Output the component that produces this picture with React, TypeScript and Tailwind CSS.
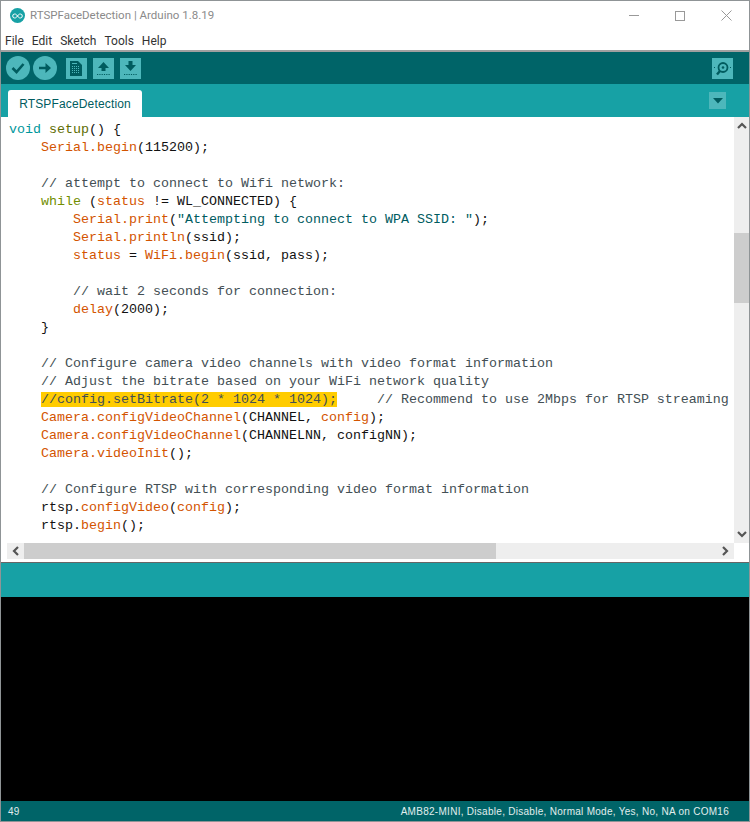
const ORANGE = "text-[#d35400]"
const TEAL = "text-[#00979c]"
const OLIVE = "text-[#5e6d03]"
const GREEN = "text-[#728e00]"
const GREY = "text-[#434f54]"
const STR = "text-[#005c5f]"
const PLAIN = "text-[#111]"

type Token = [string, string?, boolean?]

const lines: Token[][] = [
  [["void", TEAL], [" "], ["setup", OLIVE], ["() {"]],
  [["    "], ["Serial.begin", ORANGE], ["(115200);"]],
  [],
  [["    "], ["// attempt to connect to Wifi network:", GREY]],
  [["    "], ["while", GREEN], [" ("], ["status", ORANGE], [" != WL_CONNECTED) {"]],
  [["        "], ["Serial.print", ORANGE], ["("], ['"Attempting to connect to WPA SSID: "', STR], [");"]],
  [["        "], ["Serial.println", ORANGE], ["(ssid);"]],
  [["        "], ["status", ORANGE], [" = "], ["WiFi.begin", ORANGE], ["(ssid, pass);"]],
  [],
  [["        "], ["// wait 2 seconds for connection:", GREY]],
  [["        "], ["delay", ORANGE], ["(2000);"]],
  [["    }"]],
  [],
  [["    "], ["// Configure camera video channels with video format information", GREY]],
  [["    "], ["// Adjust the bitrate based on your WiFi network quality", GREY]],
  [["    "], ["//config.setBitrate(2 * 1024 * 1024);", "text-[#434f54] bg-[#ffcc00]"], ["     "], ["// Recommend to use 2Mbps for RTSP streaming", GREY]],
  [["    "], ["Camera.configVideoChannel", ORANGE], ["(CHANNEL, "], ["config", ORANGE], [");"]],
  [["    "], ["Camera.configVideoChannel", ORANGE], ["(CHANNELNN, configNN);"]],
  [["    "], ["Camera.videoInit", ORANGE], ["();"]],
  [],
  [["    "], ["// Configure RTSP with corresponding video format information", GREY]],
  [["    "], ["rtsp."], ["configVideo", ORANGE], ["("], ["config", ORANGE], [");"]],
  [["    "], ["rtsp."], ["begin", ORANGE], ["();"]],
]

function ToolIcon({ children }: { children: React.ReactNode }) {
  return <div className="flex h-[21px] w-[21px] items-center justify-center bg-[#4db7bb]">{children}</div>
}

function RoundIcon({ children }: { children: React.ReactNode }) {
  return <div className="flex h-6 w-6 items-center justify-center rounded-full bg-[#4db7bb]">{children}</div>
}

function Chevron({ d }: { d: string }) {
  return (
    <svg width="10" height="10" viewBox="0 0 10 10" fill="none" stroke="#555" strokeWidth="2.2">
      <path d={d} />
    </svg>
  )
}

export default function App() {
  return (
    <div className="flex h-[822px] w-[750px] flex-col overflow-hidden border-r border-t border-l border-[#8f9496] bg-white font-['Roboto',sans-serif]">
      {/* Title bar */}
      <div className="flex h-[26px] shrink-0 items-center bg-white pl-[9px] pt-[3px]">
        <div className="flex h-[15px] w-[15px] items-center justify-center rounded-full bg-[#17a1a5]">
          <svg width="11" height="6" viewBox="0 0 11 6" fill="none" stroke="white" strokeWidth="1">
            <path d="M5.5 3C4.5 1.5 3.8 1 2.7 1a2 2 0 0 0 0 4c1.1 0 1.8-.5 2.8-2zm0 0c1-1.500 1.700-2 2.800-2a2 2 0 0 1 0 4c-1.100 0-1.800-.5-2.800-2z" />
          </svg>
        </div>
        <span className="ml-[5px] text-[11.5px] text-[#8a8a8a]">RTSPFaceDetection | Arduino 1.8.19</span>
        <div className="ml-auto flex items-center">
          <div className="flex w-[46px] justify-center">
            <div className="h-px w-[10px] bg-[#999]" />
          </div>
          <div className="flex w-[46px] justify-center">
            <div className="h-[10px] w-[10px] border border-[#999]" />
          </div>
          <div className="flex w-[46px] justify-center">
            <svg width="11" height="11" viewBox="0 0 11 11" stroke="#999" strokeWidth="1">
              <path d="M.5.5l10 10M10.500.5l-10 10" />
            </svg>
          </div>
        </div>
      </div>

      {/* Menu */}
      <div className="flex h-[23px] shrink-0 items-center gap-[8px] pl-[4px] pt-[4px] text-[12px] text-[#333]">
        <span>File</span>
        <span>Edit</span>
        <span>Sketch</span>
        <span>Tools</span>
        <span>Help</span>
      </div>
      <div className="h-[2px] shrink-0 bg-[#a0a0a0]" />

      {/* Toolbar */}
      <div className="flex h-[32px] shrink-0 items-center bg-[#006468] pl-[5px] pr-[16px]">
        <RoundIcon>
          <svg width="14" height="12" viewBox="0 0 14 12" fill="none" stroke="#005c5f" strokeWidth="2.600">
            <path d="M1.500 6l4 4 7-8" />
          </svg>
        </RoundIcon>
        <div className="w-[3px]" />
        <RoundIcon>
          <svg width="14" height="12" viewBox="0 0 14 12" fill="#005c5f">
            <path d="M1 4.800h6.500V1L13 6 7.500 11V7.200H1z" />
          </svg>
        </RoundIcon>
        <div className="w-[9px]" />
        <ToolIcon>
          <svg width="13" height="15" viewBox="0 0 13 15" fill="#005c5f">
            <path d="M0 0h8l4 4v11H0zM2 2v1h5V2zm0 3v1h1V5zm2 0v1h1V5zm2 0v1h1V5zm2 0v1h1V5zm-6 2v1h1V7zm2 0v1h1V7zm2 0v1h1V7zm2 0v1h1V7zm-6 2v1h1V9zm2 0v1h1V9zm2 0v1h1V9zm2 0v1h1V9zm-6 2v1h1v-1zm2 0v1h1v-1zm2 0v1h1v-1zm2 0v1h1v-1z" fillRule="evenodd" />
          </svg>
        </ToolIcon>
        <div className="w-[6px]" />
        <ToolIcon>
          <svg width="13" height="15" viewBox="0 0 13 15" fill="#005c5f">
            <path d="M6.500 1L12 7H8.500v3h-4V7H1z" />
            <path d="M0 13h1.200v1H0zm2.300 0h1.200v1H2.300zm2.300 0h1.200v1H4.600zm2.300 0h1.200v1H6.900zm2.300 0h1.200v1H9.200zm2.300 0h1.200v1h-1.200z" />
          </svg>
        </ToolIcon>
        <div className="w-[6px]" />
        <ToolIcon>
          <svg width="13" height="15" viewBox="0 0 13 15" fill="#005c5f">
            <path d="M4.500 0h4v4H12L6.500 10 1 4h3.500z" />
            <path d="M0 13h1.200v1H0zm2.300 0h1.200v1H2.300zm2.300 0h1.200v1H4.600zm2.300 0h1.200v1H6.900zm2.300 0h1.200v1H9.200zm2.300 0h1.200v1h-1.200z" />
          </svg>
        </ToolIcon>
        <div className="ml-auto">
          <ToolIcon>
            <svg width="18" height="15" viewBox="0 0 18 15" fill="none" stroke="#005c5f" strokeWidth="1.800">
              <circle cx="9" cy="6.500" r="4.500" />
              <path d="M6 10l-3 3.500" strokeWidth="2.400" />
              <circle cx="9" cy="6.500" r="1.300" fill="#005c5f" stroke="none" />
              <path d="M0 6.500h2M16 6.500h2" strokeWidth="1" strokeDasharray="1 1" />
            </svg>
          </ToolIcon>
        </div>
      </div>

      {/* Tab bar */}
      <div className="flex h-[33px] shrink-0 items-end bg-[#17a1a5] pl-[7px] pr-[23px]">
        <div className="flex h-[27px] w-[134px] items-center justify-center rounded-t-[3px] bg-white font-['Liberation_Sans',sans-serif] text-[12px] tracking-[0.15px] text-[#005c5f]">
          RTSPFaceDetection
        </div>
        <div className="mb-2 ml-auto flex h-[17px] w-[17px] items-center justify-center bg-[#4db7bb]">
          <svg width="10" height="6" viewBox="0 0 10 6" fill="#005c5f">
            <path d="M0 0h10L5 5.500z" />
          </svg>
        </div>
      </div>

      {/* Editor */}
      <div className="flex h-[426px] shrink-0">
        <div className="flex-1 overflow-hidden whitespace-pre pl-2 pt-[4px] font-['Liberation_Mono',monospace] text-[13.33px] leading-[18px] text-[#111]">
          {lines.map((line, i) => (
            <div key={i} className="h-[18px]">
              {line.map(([text, cls], j) => (
                <span key={j} className={cls ?? PLAIN}>{text}</span>
              ))}
            </div>
          ))}
        </div>
        <div className="flex w-[15px] shrink-0 flex-col bg-[#eeeeee]">
          <div className="flex h-[17px] items-center justify-center">
            <Chevron d="M1 7l4-4 4 4" />
          </div>
          <div className="h-[99px]" />
          <div className="h-[70px] bg-[#cdcdcd]" />
          <div className="flex flex-1 items-end justify-center pb-[4px]">
            <Chevron d="M1 3l4 4 4-4" />
          </div>
        </div>
      </div>

      {/* Horizontal scrollbar */}
      <div className="flex h-[16px] shrink-0 pl-[6px] pr-[15px]">
        <div className="flex w-[17px] items-center justify-center bg-[#eeeeee]">
          <Chevron d="M7 1L3 5l4 4" />
        </div>
        <div className="w-[472px] bg-[#cdcdcd]" />
        <div className="flex flex-1 items-center justify-end bg-[#eeeeee] pr-[4px]">
          <Chevron d="M3 1l4 4-4 4" />
        </div>
      </div>
      <div className="h-[3px] shrink-0 bg-white" />
      <div className="h-px shrink-0 bg-[#666]" />

      {/* Message area */}
      <div className="h-[34px] shrink-0 bg-[#17a1a5]" />

      {/* Console */}
      <div className="flex-1 bg-black" />

      {/* Status bar */}
      <div className="flex h-[20px] shrink-0 items-center justify-between bg-[#006468] pl-[7px] pr-[20px] pt-px font-['Liberation_Sans',sans-serif] text-[10px] tracking-[0.28px] text-[#e0eeee]">
        <span>49</span>
        <span>AMB82-MINI, Disable, Disable, Normal Mode, Yes, No, NA on COM16</span>
      </div>
      <div className="h-px shrink-0 bg-[#8f9496]" />
    </div>
  )
}
